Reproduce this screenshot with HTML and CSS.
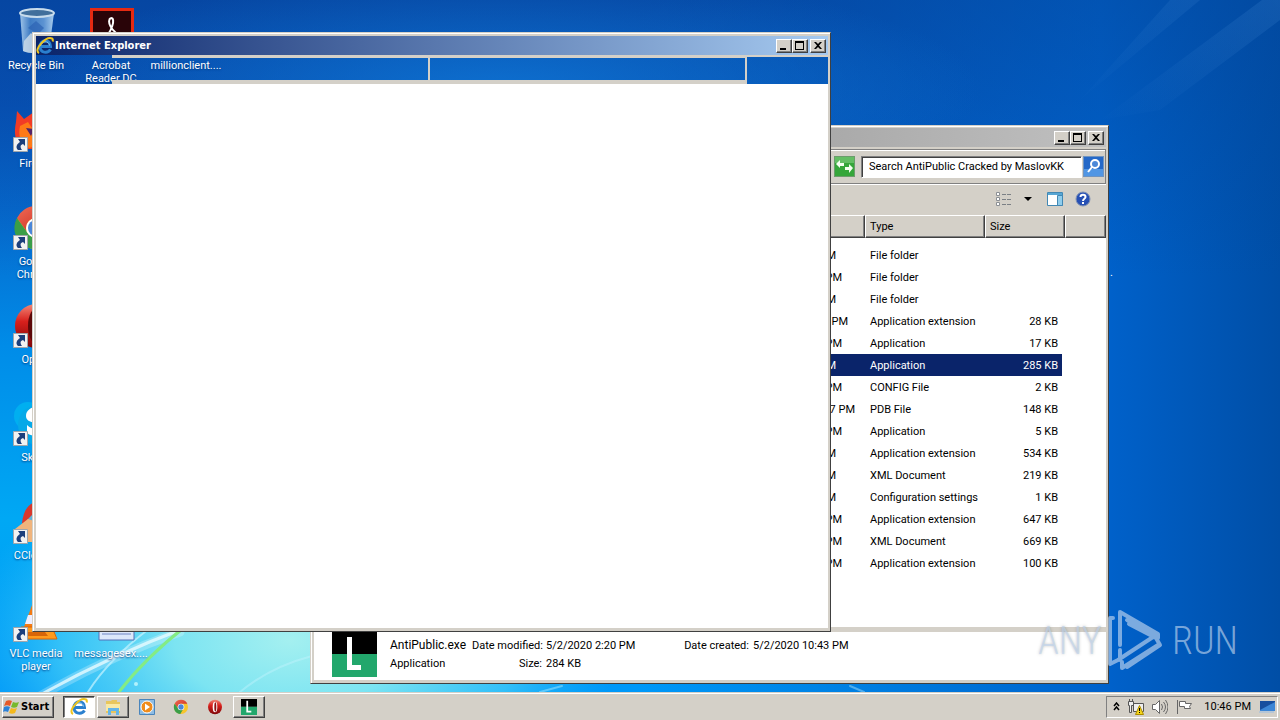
FILE: index.html
```html
<!DOCTYPE html>
<html lang="en">
<head>
<meta charset="utf-8">
<title>Desktop</title>
<link rel="stylesheet" href="styles.css">
</head>
<body>
<svg class="defs" width="0" height="0" aria-hidden="true">
  <defs>
    <linearGradient id="chromeface" x1="0" y1="0" x2="1" y2="1"><stop offset="0" stop-color="#f06a55"/><stop offset="1" stop-color="#c8281c"/></linearGradient>
    <linearGradient id="operaface" x1="0" y1="0" x2="0" y2="1"><stop offset="0" stop-color="#f08878"/><stop offset=".4" stop-color="#d8201c"/><stop offset="1" stop-color="#7c0608"/></linearGradient>
    <linearGradient id="glass" x1="0" y1="0" x2="1" y2="0"><stop offset="0" stop-color="#9fc4e8"/><stop offset=".3" stop-color="#3f7cc4"/><stop offset=".7" stop-color="#5c93d2"/><stop offset="1" stop-color="#a8cdee"/></linearGradient>
    <symbol id="arrow" viewBox="0 0 15 15"><path fill="#f2f2f2" stroke="#a0a6ac" d="M.5.5h14v14H.5z"/><path fill="#1c3f7c" d="M5 2h7v7l-2-2c-3 1-3 3-1 6H5C2 10 4 7 7 5z"/></symbol>
    <symbol id="chrome" viewBox="0 0 48 48"><circle cx="24" cy="24" r="21" fill="#f7c52c"/><path fill="url(#chromeface)" d="M5 14a21 21 0 0 1 38 0H24a10 10 0 0 0-9 14z"/><path fill="#3a9e48" d="M5 14a21 21 0 0 0 17 31l10-17a10 10 0 0 1-17 0z"/><circle cx="24" cy="24" r="10" fill="#fff"/><circle cx="24" cy="24" r="8" fill="#4a86d8"/></symbol>
    <symbol id="opera" viewBox="0 0 48 48"><ellipse cx="24" cy="24" rx="21" ry="22" fill="url(#operaface)"/><ellipse cx="24" cy="24" rx="7" ry="16" fill="#fff"/><ellipse cx="25" cy="24" rx="3" ry="14" fill="#8c1010"/></symbol>
    <symbol id="operabig" viewBox="0 0 48 48"><ellipse cx="24" cy="24" rx="21" ry="22" fill="url(#operaface)"/><ellipse cx="26" cy="24" rx="10" ry="19" fill="#5c0808"/></symbol>
    <symbol id="ie" viewBox="0 0 18 18"><path fill="none" stroke="#2a80cf" stroke-width="3" d="M4 9.500h10.500C14.500 1.500 4 2 4 9.500c0 7 8 7 10.500 3"/><path fill="none" stroke="#8cc8f2" stroke-width="1" d="M4.500 9C5 4 13 3 13.500 8.500"/><path fill="none" stroke="#eec41f" stroke-width="2" d="M3 16C-3 13 10-1 16 1.500c1 .5 1 2 .5 3"/></symbol>
    <symbol id="ell" viewBox="0 0 45 45"><path d="M0 0h45v22H0z"/><path fill="#22a76c" d="M0 22h45v23H0z"/><path fill="#fff" d="M15 5h5v28h9v5H15z"/></symbol>
    <symbol id="min" viewBox="0 0 14 12"><path d="M3 8h6v2H3z"/></symbol>
    <symbol id="max" viewBox="0 0 14 12"><path fill-rule="evenodd" d="M2 1h9v9H2zM3 3h7v6H3z"/></symbol>
    <symbol id="close" viewBox="0 0 14 12"><path d="M3 2h2l2 2 2-2h2L8 5.500 11 9H9L7 7 5 9H3l3-3.500z"/></symbol>
  </defs>
</svg>

<main class="desktop">
  <svg class="wallpaper" viewBox="0 0 1280 692" preserveAspectRatio="none" aria-hidden="true">
    <defs>
      <linearGradient id="sky" x1="0" y1="0" x2="0" y2="1"><stop offset="0" stop-color="#0846a8"/><stop offset=".15" stop-color="#0852b8"/><stop offset=".3" stop-color="#0668cc"/><stop offset=".5" stop-color="#008ce8"/><stop offset=".75" stop-color="#00a8f4"/><stop offset="1" stop-color="#0098f8"/></linearGradient>
      <linearGradient id="dusk" x1="0" y1="0" x2="1" y2="0"><stop offset=".5" stop-color="#0064c8" stop-opacity="0"/><stop offset=".86" stop-color="#0062cc"/><stop offset="1" stop-color="#004ea6"/></linearGradient>
      <linearGradient id="top" x1="0" y1="0" x2="0" y2="1"><stop offset="0" stop-color="#04469c" stop-opacity=".5"/><stop offset=".4" stop-color="#04469c" stop-opacity="0"/></linearGradient>
      <radialGradient id="lift" gradientUnits="userSpaceOnUse" cx="0" cy="0" r="1" gradientTransform="translate(500 90) scale(480 120)"><stop offset="0" stop-color="#0f78d8" stop-opacity=".8"/><stop offset="1" stop-color="#0f78d8" stop-opacity="0"/></radialGradient>
      <radialGradient id="glow" gradientUnits="userSpaceOnUse" cx="0" cy="0" r="1" gradientTransform="translate(290 640) scale(330 190)"><stop offset="0" stop-color="#a4f0f0"/><stop offset=".35" stop-color="#7ce4f2"/><stop offset=".7" stop-color="#48d0f8" stop-opacity=".7"/><stop offset="1" stop-color="#20b8f8" stop-opacity="0"/></radialGradient>
      <linearGradient id="ray" x1="0" y1="1" x2="1" y2="0"><stop offset="0" stop-color="#3c88d8" stop-opacity="0"/><stop offset="1" stop-color="#4b90d8" stop-opacity=".2"/></linearGradient>
    </defs>
    <path fill="url(#sky)" d="M0 0h1280v692H0z"/>
    <path fill="url(#dusk)" d="M0 0h1280v692H0z"/>
    <path fill="url(#top)" d="M0 0h1280v692H0z"/>
    <path fill="url(#lift)" d="M0 0h1000v230H0z"/>
    <path fill="url(#glow)" d="M0 430h700v262H0z"/>
    <path fill="url(#ray)" d="M1100 120L1262 0h18v20L1160 110zM1080 100L1170 0h30z"/>
    <g fill="none" stroke-linecap="round">
      <path stroke="#fff" stroke-opacity=".25" stroke-width="9" d="M40 696Q110 656 180 632"/>
      <path stroke="#e8fbff" stroke-opacity=".8" stroke-width="3" d="M42 694Q110 656 185 628"/>
      <path stroke="#c8f4ff" stroke-opacity=".7" stroke-width="2" d="M88 692Q108 660 150 628"/>
      <path stroke="#84ec84" stroke-width="3" d="M119 692Q145 658 186 626"/>
      <path stroke="#c8f4ff" stroke-opacity=".4" stroke-width="2" d="M240 692Q270 667 312 656M540 692l22-6M850 686l14 6"/>
    </g>
    <circle cx="136" cy="684" r="2" fill="#d8ffff" opacity=".7"/>
  </svg>

  <section class="shortcuts" aria-label="Desktop icons">
    <div class="shortcut at-1"><svg viewBox="0 0 48 48"><path fill="url(#glass)" d="M8 5l3 38c7 3 20 3 26 0l5-38z"/><ellipse cx="25" cy="5" rx="17" ry="4" fill="#416f9c" stroke="#c8dcec" stroke-width="2"/><path fill="#cfdde8" opacity=".8" d="M12 33l7-8 9 9 6-5 3 14c-7 3-20 3-26 0z"/><path fill="#2c62b4" opacity=".7" d="M16 20l8-7 8 7-6 6z"/></svg><span>Recycle Bin</span></div>
    <div class="shortcut at-1 second"><svg viewBox="0 0 48 48"><path fill="#290408" stroke="#e52a12" stroke-width="3" d="M4.500 1.500h41v44h-41z"/><path fill="none" stroke="#fff" stroke-width="2" d="M24 10c5 0 1 14-8 22M24 10c-5 2 0 15 12 18M17 29c6-4 14-4 19-1"/></svg><span>Acrobat Reader DC</span></div>
    <div class="shortcut at-1 third"><svg viewBox="0 0 48 48"></svg><span>millionclient....</span></div>
    <div class="shortcut"><svg viewBox="0 0 48 48"><path fill="#f23c26" d="M4 16l1-11 7 8 10-7 15 8 4 15-10 14H13C2 38 2 26 4 16z"/><path fill="#ff7a17" d="M8 20l8-4 4 6 14 2-5 15-12 3C8 38 6 29 8 20z"/><path fill="#542468" d="M14 22l8 1-3 7z"/><use href="#arrow" x="1" y="31" width="15" height="15"/></svg><span>Firefox</span></div>
    <div class="shortcut"><svg viewBox="0 0 48 48"><use href="#chrome" width="48" height="48"/><use href="#arrow" x="1" y="31" width="15" height="15"/></svg><span>Google Chrome</span></div>
    <div class="shortcut"><svg viewBox="0 0 48 48"><use href="#operabig" width="48" height="48"/><use href="#arrow" x="1" y="31" width="15" height="15"/></svg><span>Opera</span></div>
    <div class="shortcut"><svg viewBox="0 0 48 48"><circle cx="16" cy="16" r="14" fill="#00aff0"/><circle cx="26" cy="25" r="20" fill="#06a9e8"/><path fill="#fff" d="M34 10c-8-6-20-3-20 6 0 9 16 5 14 11-2 4-9 2-13-2v8c8 6 21 3 21-6 0-9-14-7-14-11 0-3 7-3 13 0z"/><use href="#arrow" x="1" y="31" width="15" height="15"/></svg><span>Skype</span></div>
    <div class="shortcut"><svg viewBox="0 0 48 48"><path fill="#d8382c" d="M10 25C12 8 20 3 30 3c14 0 18 12 15 26l-16 14z"/><path fill="#5fb4dc" d="M15 22l8-8 9 8-7 8z"/><path fill="#f0b47c" d="M3 31l13-10 12 4-8 19H3z"/><use href="#arrow" x="1" y="31" width="15" height="15"/></svg><span>CCleaner</span></div>
    <div class="shortcut"><svg viewBox="0 0 48 48"><path fill="#f47a12" d="M23 1h4l10 30H12z"/><path fill="#eef" d="M16 19h17l3 9H13z"/><path fill="#ff9a1c" stroke="#d86508" d="M9 31h31l5 12H9z"/><path fill="#d86508" d="M15 36h18l3 4H14z"/><use href="#arrow" x="1" y="31" width="15" height="15"/></svg><span>VLC media player</span></div>
    <div class="shortcut second"><svg viewBox="0 0 48 48"><path fill="#dce8fa" stroke="#5470b8" d="M12 1h35v43H12z"/><path stroke="#6f86c4" d="M15 38h29"/></svg><span>messagesex....</span></div>
  </section>
  <span class="stray">.</span>

  <section class="window explorer" aria-label="AntiPublic Cracked by MaslovKK">
    <header class="titlebar idle">
      <div class="controls">
        <button aria-label="Minimize"><svg><use href="#min"/></svg></button><button aria-label="Maximize"><svg><use href="#max"/></svg></button><button class="shut" aria-label="Close"><svg><use href="#close"/></svg></button>
      </div>
    </header>
    <form class="address">
      <button type="button" class="refresh" aria-label="Refresh"><svg viewBox="0 0 19 19"><path fill="#35a63a" d="M0 0h19v19H0z"/><path fill="#82cf80" d="M0 0h19v6H0z" opacity=".6"/><path fill="#f4fff0" d="M1 7l4-4v3h4v3H5v2zM18 11l-4 5v-3h-4v-3h4V7z"/></svg></button>
      <input class="search" type="text" aria-label="Search" value="Search AntiPublic Cracked by MaslovKK">
      <button type="button" class="go" aria-label="Go"><svg viewBox="0 0 19 19"><path fill="#2468c8" d="M0 0h19v19H0z"/><path fill="#65aaf0" d="M0 12h19v7H0z" opacity=".7"/><circle cx="11" cy="7" r="4" fill="#4c88d8" stroke="#fff" stroke-width="2"/><path stroke="#fff" stroke-width="2" d="M8 10l-4 5"/></svg></button>
    </form>
    <div class="toolbar">
      <button aria-label="View"><svg width="16" height="14" viewBox="0 0 16 14"><path fill="#fff" stroke="#8b8f94" d="M.5.5h3v3h-3zM.5 5.500h3v3h-3zM.5 10.500h3v3h-3z"/><path stroke="#7b8085" stroke-dasharray="4 1" d="M6 2.500h10M6 7.500h10M6 12.500h10"/></svg></button>
      <button class="more" aria-label="More options"><svg width="8" height="4" viewBox="0 0 8 4"><path d="M0 0h8L4 4z"/></svg></button>
      <button class="pane" aria-label="Preview pane"><svg width="16" height="14" viewBox="0 0 16 14"><path fill="#fff" stroke="#4288b4" d="M.5.5h15v13H.5z"/><path fill="#56a6d4" d="M1 1h14v2H1z"/><path fill="#90cdec" stroke="#4288b4" d="M10.500 3.500h5v10h-5z"/></svg></button>
      <button aria-label="Help"><svg width="16" height="16" viewBox="0 0 16 16"><circle cx="8" cy="8" r="7" fill="#2750b4" stroke="#8394b4"/><path fill="none" stroke="#fff" stroke-width="2" d="M5.500 6C5.500 3 10.500 3 10.500 6 10.500 8 8 7.500 8 10M8 11v2"/></svg></button>
    </div>
    <div class="listing">
      <table>
        <colgroup><col><col class="c-type"><col class="c-size"><col class="c-rest"></colgroup>
        <thead><tr><th></th><th>Type</th><th>Size</th><th></th></tr></thead>
        <tbody>
          <tr><td class="d1">PM</td><td>File folder</td><td></td><td></td></tr>
          <tr><td class="d2">PM</td><td>File folder</td><td></td><td></td></tr>
          <tr><td class="d1">PM</td><td>File folder</td><td></td><td></td></tr>
          <tr><td class="d3">PM</td><td>Application extension</td><td>28 KB</td><td></td></tr>
          <tr><td class="d2">PM</td><td>Application</td><td>17 KB</td><td></td></tr>
          <tr class="selected"><td class="d1">PM</td><td>Application</td><td>285 KB</td><td></td></tr>
          <tr><td class="d2">PM</td><td>CONFIG File</td><td>2 KB</td><td></td></tr>
          <tr><td class="d4">7 PM</td><td>PDB File</td><td>148 KB</td><td></td></tr>
          <tr><td class="d2">PM</td><td>Application</td><td>5 KB</td><td></td></tr>
          <tr><td class="d1">PM</td><td>Application extension</td><td>534 KB</td><td></td></tr>
          <tr><td class="d1">PM</td><td>XML Document</td><td>219 KB</td><td></td></tr>
          <tr><td class="d1">PM</td><td>Configuration settings</td><td>1 KB</td><td></td></tr>
          <tr><td class="d2">PM</td><td>Application extension</td><td>647 KB</td><td></td></tr>
          <tr><td class="d2">PM</td><td>XML Document</td><td>669 KB</td><td></td></tr>
          <tr><td class="d2">PM</td><td>Application extension</td><td>100 KB</td><td></td></tr>
        </tbody>
      </table>
    </div>
    <footer class="details">
      <svg class="file-icon"><use href="#ell"/></svg>
      <div class="facts">
        <span class="name">AntiPublic.exe</span><span class="key">Date modified:</span><span>5/2/2020 2:20 PM</span><span class="key">Date created:</span><span>5/2/2020 10:43 PM</span>
        <span>Application</span><span class="key">Size:</span><span>284 KB</span>
      </div>
    </footer>
  </section>

  <section class="window browser" aria-label="Internet Explorer">
    <header class="titlebar active">
      <svg class="app-icon"><use href="#ie"/></svg>
      <h1>Internet Explorer</h1>
      <div class="controls">
        <button aria-label="Minimize"><svg><use href="#min"/></svg></button><button aria-label="Maximize"><svg><use href="#max"/></svg></button><button class="shut" aria-label="Close"><svg><use href="#close"/></svg></button>
      </div>
    </header>
    <div class="bands"><div class="band-a"></div><div class="band-b"></div><div class="band-c"></div><div class="band-d"></div></div>
    <div class="page"></div>
  </section>

  <div class="watermark"><span>ANY</span><svg viewBox="0 0 56 64" fill="none" stroke="currentColor" stroke-width="4" stroke-linejoin="round" stroke-linecap="round"><path d="M5 9H2v46l8-4 35-23M12 36V3l38 22v4l-31-18M19 58l33-22-4-7-27-14M12 41v10M14 53v6l36-23"/></svg><span>RUN</span></div>
</main>

<nav class="taskbar" aria-label="Taskbar">
  <button class="start"><svg viewBox="0 0 17 16"><path fill="#e65a28" d="M3 2c2-1 4-1 6 0L7 7C5 6 3 6 1 7z"/><path fill="#77b92c" d="M10 3c2 1 4 1 6 0l-2 5c-2 1-4 1-6 0z"/><path fill="#2b82d8" d="M1 8c2-1 4-1 6 0l-2 5c-2-1-4-1-5 0z"/><path fill="#f4b91c" d="M8 9c2 1 4 1 6 0l-2 5c-2 1-4 1-6 0z"/></svg>Start</button>
  <button class="task pressed" aria-label="Internet Explorer"><svg><use href="#ie"/></svg></button>
  <button class="task raised" aria-label="Windows Explorer"><svg viewBox="0 0 18 18"><path fill="#e8c65c" d="M2 3h5l1-1h5v2h3v11H2z"/><path fill="#f9e9a4" d="M2 6h14v7H2z"/><path fill="#64b5e8" d="M4 10h11v7h-3v-4H7v4H4z"/></svg></button>
  <button class="task" aria-label="Media Player"><svg viewBox="0 0 18 18"><path fill="#8dbce4" stroke="#4a85bc" d="M1.500 1.500h15v15h-15z"/><circle cx="9" cy="9" r="6" fill="#f08c1c" stroke="#fff"/><path fill="#fff" d="M7 5.500l5 3.500-5 3.500z"/></svg></button>
  <button class="task" aria-label="Chrome"><svg class="small"><use href="#chrome"/></svg></button>
  <button class="task" aria-label="Opera"><svg class="small"><use href="#opera"/></svg></button>
  <button class="task raised" aria-label="AntiPublic"><svg class="small"><use href="#ell"/></svg></button>
  <div class="tray">
    <svg width="7" height="9" viewBox="0 0 7 9" fill="none" stroke="#000" stroke-width="1.500"><path d="M1 4l2.500-3L6 4M1 8l2.500-3L6 8"/></svg>
    <svg width="16" height="16" viewBox="0 0 16 16"><path fill="#eee" stroke="#555" d="M5.500 4.500h10v8h-10zM.5 2.500h5v4h-2v7h-2v-7h-1zM1.500 0v3M4.500 0v3"/><path fill="#f4d51a" stroke="#ab8b00" d="M11.500 6.500l4 9h-8z"/><path stroke="#000" d="M11.500 9v3M11.500 13v1"/></svg>
    <svg width="16" height="16" viewBox="0 0 16 16" fill="none" stroke="#666"><path fill="#fff" d="M.5 5.500h3l4-4v13l-4-4h-3z"/><path d="M9.500 5q2 3 0 6M11.500 3q4 5 0 10M13.500 1q5 7 0 14"/></svg>
    <svg width="16" height="16" viewBox="0 0 16 16"><path fill="#fff" stroke="#666" d="M1.500 1v14M3.500 2.500h6v2h6l-2 3 1 2H8.500v-2h-5z"/></svg>
    <time>10:46 PM</time>
    <svg width="16" height="14" viewBox="0 0 16 14"><path fill="#174e9e" d="M1 1h15v10H1z"/><path fill="#3c86d6" d="M1 10L16 2v9H1z"/><path fill="#b6c6d6" d="M0 11h15v2H0z"/></svg>
  </div>
</nav>
</body>
</html>
```
FILE: styles.css
```css
* { box-sizing: border-box; }

body {
  margin: 0;
  height: 100vh;
  display: flex;
  flex-direction: column;
  overflow: hidden;
  font-family: "Roboto", "Liberation Sans", sans-serif;
  font-size: 11px;
  line-height: 13px;
  color: #000;
}

button, input { font: inherit; color: inherit; margin: 0; padding: 0; border: 0; background: none; border-radius: 0; }
svg { display: block; flex: none; }
.defs { position: absolute; }

.desktop { position: relative; flex: 1; min-height: 0; overflow: hidden; background: #0068cc; }
.wallpaper { position: absolute; inset: 0; width: 100%; height: 100%; }

/* Desktop icons */
.shortcuts {
  position: relative;
  display: grid;
  grid-template-columns: repeat(3, 72px);
  grid-auto-rows: 98px;
  column-gap: 3px;
  padding-top: 8px;
}
.shortcut { grid-column: 1; display: flex; flex-direction: column; align-items: center; gap: 3px; color: #fff; text-align: center; text-shadow: 0 1px 2px #003a80; }
.shortcut svg { width: 48px; height: 48px; }
.shortcut span { padding: 0 3px; }
.at-1 { grid-row: 1; }
.second { grid-column: 2; }
.third { grid-column: 3; }
.stray { position: absolute; left: 1110px; top: 266px; color: #fff; }

/* Windows */
.window { position: absolute; display: flex; flex-direction: column; border: 1px solid #d4d0c8; border-right-color: #404040; border-bottom-color: #404040; }
.titlebar { display: flex; align-items: center; height: 19px; flex: none; }
.active { background: linear-gradient(90deg, #0a246a, #a6caf0); }
.idle { background: linear-gradient(90deg, #808080, #c0c0c0); }
.titlebar h1 { margin: 0; color: #fff; font: bold 11px/13px "DejaVu Sans Condensed", "DejaVu Sans", sans-serif; }
.app-icon { width: 18px; height: 18px; margin: 0 1px 0 0; }
.controls { display: flex; margin-left: auto; padding-right: 2px; }
.controls button, .raised, .start {
  background: #d4d0c8;
  border: 1px solid;
  border-color: #fff #404040 #404040 #fff;
  box-shadow: inset -1px -1px #808080;
}
.controls button { width: 16px; height: 14px; }
.controls svg { width: 14px; height: 12px; }
.controls .shut { margin-left: 2px; }

.browser { left: 32px; top: 32px; width: 799px; height: 600px; }
.browser > * { border: solid #d4d0c8; border-width: 0 2px 0 3px; }
.browser > .titlebar { border-top-width: 3px; height: 22px; }
.browser .bands { display: flex; height: 29px; flex: none; }
.bands div { border: solid #d4d0c8; border-width: 3px 2px 4px 0; }
.bands .band-a { flex: 0 0 76px; border-width: 0; }
.bands .band-b { flex: 0 0 318px; }
.bands .band-c { flex: 1; }
.bands .band-d { flex: 0 0 81px; border-width: 2px 0 0; }
.browser .page { flex: 1; background: #fff; border-bottom-width: 3px; }
.browser::before { content: ""; position: absolute; inset: 0; border-top: 1px solid #fff; border-left: 1px solid #fff; pointer-events: none; }

.explorer { left: 310px; top: 125px; width: 799px; height: 559px; padding: 2px 2px 3px 3px; background: #d4d0c8; box-shadow: inset 1px 1px #fff; }

.address { display: flex; align-items: center; justify-content: flex-end; height: 35px; flex: none; margin-top: 2px; border: solid #808080; border-width: 1px 1px 1px 0; box-shadow: inset 0 1px #fff, 0 1px #fff; }
.refresh, .go { width: 21px; height: 21px; border: 1px solid #6c9c6c; }
.refresh { margin-right: 6px; }
.go { border-color: #7094c0; margin-left: 1px; }
.address svg { width: 19px; height: 19px; }
.search { width: 221px; height: 22px; padding: 0 7px; background: #fff; border: 1px solid #808080; border-right-color: #fff; border-bottom-color: #fff; box-shadow: inset 1px 1px #404040; }
.address { padding-right: 1px; }

.toolbar { display: flex; align-items: center; justify-content: flex-end; height: 31px; flex: none; padding: 0 15px 1px 0; }
.more { margin-left: 12px; }
.pane { margin: 0 12px 0 15px; }

.listing { flex: 1; min-height: 0; background: #fff; border-bottom: 5px solid #d4d0c8; }
table { width: 100%; table-layout: fixed; border-collapse: separate; border-spacing: 0; }
.c-type { width: 120px; }
.c-size { width: 80px; }
.c-rest { width: 41px; }
th { height: 23px; padding: 0 4px; text-align: left; font-weight: normal; background: #d4d0c8; border: 1px solid; border-color: #fff #404040 #404040 #fff; box-shadow: inset -1px -1px #808080; }
tbody::before { content: ""; display: block; height: 6px; }
td { height: 22px; padding: 0 7px 0 5px; white-space: nowrap; }
td:nth-child(3), td:first-child { text-align: right; }
.selected td { color: #fff; background: #0a246a; }
.selected td:nth-child(3) { background: linear-gradient(#0a246a, #0a246a) no-repeat; background-size: calc(100% - 3px) 100%; }
.selected td:last-child { background: none; }
td.d1 { padding-right: 29px; }
td.d2 { padding-right: 23px; }
td.d3 { padding-right: 17px; }
td.d4 { padding-right: 10px; }

.details { display: flex; height: 48px; flex: none; padding-left: 18px; background: #fff; }
.file-icon { width: 45px; height: 45px; }
.facts { display: grid; grid-template-columns: 78px 70px 132px 67px auto; gap: 5px 4px; align-content: start; padding: 7px 0 0 13px; white-space: nowrap; }
.name { font-size: 12px; }
.key { text-align: right; }

.watermark { position: absolute; left: 1038px; top: 609px; display: flex; align-items: center; gap: 8px; color: rgba(190, 212, 238, .65); font: 300 38px/64px "Roboto Condensed Light", "Open Sans Condensed Light", "Roboto Condensed", "Liberation Sans Narrow", "Open Sans Condensed", sans-serif; }
.watermark svg { width: 56px; height: 64px; }
.watermark span { width: 62px; }
.watermark span:first-child { text-shadow: 0 0 3px rgba(90, 90, 90, .35); }

/* Taskbar */
.taskbar { display: flex; align-items: center; height: 28px; flex: none; padding: 2px 2px 2px; background: #d4d0c8; border-top: 1px solid #d4d0c8; box-shadow: inset 0 1px #fff; position: relative; }
.start { display: flex; align-items: center; gap: 1px; width: 52px; height: 22px; margin-right: 9px; font: bold 11px/14px "DejaVu Sans Condensed", "DejaVu Sans", sans-serif; }
.start svg { width: 17px; height: 16px; }
.task { display: flex; align-items: center; justify-content: center; width: 32px; height: 22px; margin-right: 2px; }
.task svg { width: 18px; height: 18px; }
.task svg.small { width: 16px; height: 16px; }
.pressed { background: #fff; border: 1px solid; border-color: #404040 #fff #fff #404040; box-shadow: inset 1px 1px #808080; }
.tray { display: flex; align-items: center; gap: 8px; width: 172px; height: 22px; margin-left: auto; padding: 0 2px 0 6px; border: 1px solid; border-color: #808080 #fff #fff #808080; }
.tray time { margin-left: auto; }
```
